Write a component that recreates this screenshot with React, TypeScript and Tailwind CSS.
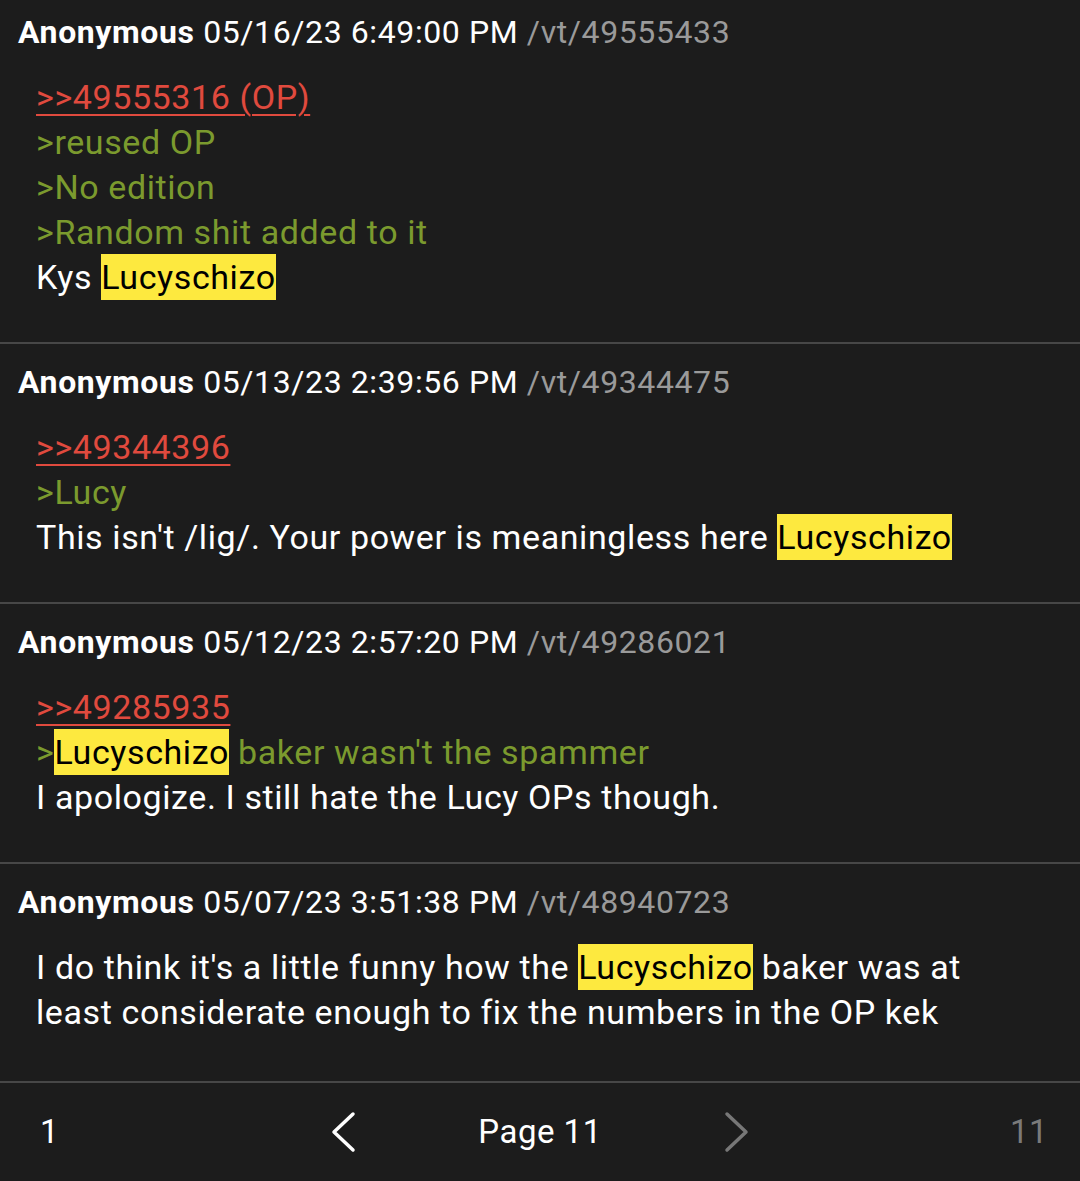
import React from 'react';

type Seg = { t: string; kind?: 'hl' | 'green' | 'link' };
type Line = Seg[];

interface Post {
  date: string;
  id: string;
  lines: Line[];
}

const posts: Post[] = [
  {
    date: '05/16/23 6:49:00 PM',
    id: '/vt/49555433',
    lines: [
      [{ t: '>>49555316 (OP)', kind: 'link' }],
      [{ t: '>reused OP', kind: 'green' }],
      [{ t: '>No edition', kind: 'green' }],
      [{ t: '>Random shit added to it', kind: 'green' }],
      [{ t: 'Kys ' }, { t: 'Lucyschizo', kind: 'hl' }],
    ],
  },
  {
    date: '05/13/23 2:39:56 PM',
    id: '/vt/49344475',
    lines: [
      [{ t: '>>49344396', kind: 'link' }],
      [{ t: '>Lucy', kind: 'green' }],
      [{ t: "This isn't /lig/. Your power is meaningless here " }, { t: 'Lucyschizo', kind: 'hl' }],
    ],
  },
  {
    date: '05/12/23 2:57:20 PM',
    id: '/vt/49286021',
    lines: [
      [{ t: '>>49285935', kind: 'link' }],
      [{ t: '>', kind: 'green' }, { t: 'Lucyschizo', kind: 'hl' }, { t: " baker wasn't the spammer", kind: 'green' }],
      [{ t: 'I apologize. I still hate the Lucy OPs though.' }],
    ],
  },
  {
    date: '05/07/23 3:51:38 PM',
    id: '/vt/48940723',
    lines: [
      [
        { t: "I do think it's a little funny how the " },
        { t: 'Lucyschizo', kind: 'hl' },
        { t: ' baker was at least considerate enough to fix the numbers in the OP kek' },
      ],
    ],
  },
];

const Segment: React.FC<{ seg: Seg }> = ({ seg }) => {
  if (seg.kind === 'hl') {
    return <span className="bg-[#fde93f] text-black py-[3px]">{seg.t}</span>;
  }
  if (seg.kind === 'green') {
    return <span className="text-[#7b9a2e]">{seg.t}</span>;
  }
  if (seg.kind === 'link') {
    return <span className="text-[#e04a3e] underline underline-offset-[5px] decoration-2">{seg.t}</span>;
  }
  return <span>{seg.t}</span>;
};

const PostItem: React.FC<{ post: Post; first: boolean }> = ({ post, first }) => (
  <div className={first ? 'pt-[12px] pb-[42px]' : 'border-t-2 border-[#474747] pt-[18px] pb-[42px]'}>
    <div className="pl-[18px] h-[40px] leading-[40px] text-[32px] tracking-[0.6px] whitespace-nowrap">
      <span className="font-bold text-white">Anonymous</span>
      <span className="text-white"> {post.date} </span>
      <span className="text-[#9a9a9a]">{post.id}</span>
    </div>
    <div className="mt-[23px] pl-[36px] pr-[56px] text-[34px] tracking-[0.6px] leading-[45px] text-white">
      {post.lines.map((line, i) => (
        <div key={i}>
          {line.map((seg, j) => (
            <Segment key={j} seg={seg} />
          ))}
        </div>
      ))}
    </div>
  </div>
);

const Chevron: React.FC<{ dir: 'left' | 'right'; color: string }> = ({ dir, color }) => (
  <svg width="26" height="42" viewBox="0 0 26 42" fill="none">
    <path
      d={dir === 'left' ? 'M23 3 L4 21 L23 39' : 'M3 3 L22 21 L3 39'}
      stroke={color}
      strokeWidth="3.5"
      strokeLinecap="round"
      strokeLinejoin="round"
    />
  </svg>
);

export default function App() {
  return (
    <div
      className="w-[1080px] h-[1181px] bg-[#1c1c1c] overflow-hidden flex flex-col"
      style={{ fontFamily: 'Roboto, "Noto Sans", sans-serif' }}
    >
      <div className="flex-1">
        {posts.map((p, i) => (
          <PostItem key={p.id} post={p} first={i === 0} />
        ))}
      </div>
      <div className="border-t-2 border-[#474747] h-[100px] flex items-center text-[33px] tracking-[0.5px] text-white">
        <div className="w-[200px] pl-[40px]">1</div>
        <div className="flex-1 flex items-center justify-center gap-[122px]">
          <Chevron dir="left" color="#ffffff" />
          <span>Page 11</span>
          <Chevron dir="right" color="#777777" />
        </div>
        <div className="w-[200px] pr-[32px] text-right text-[#7a7a7a]">11</div>
      </div>
    </div>
  );
}
